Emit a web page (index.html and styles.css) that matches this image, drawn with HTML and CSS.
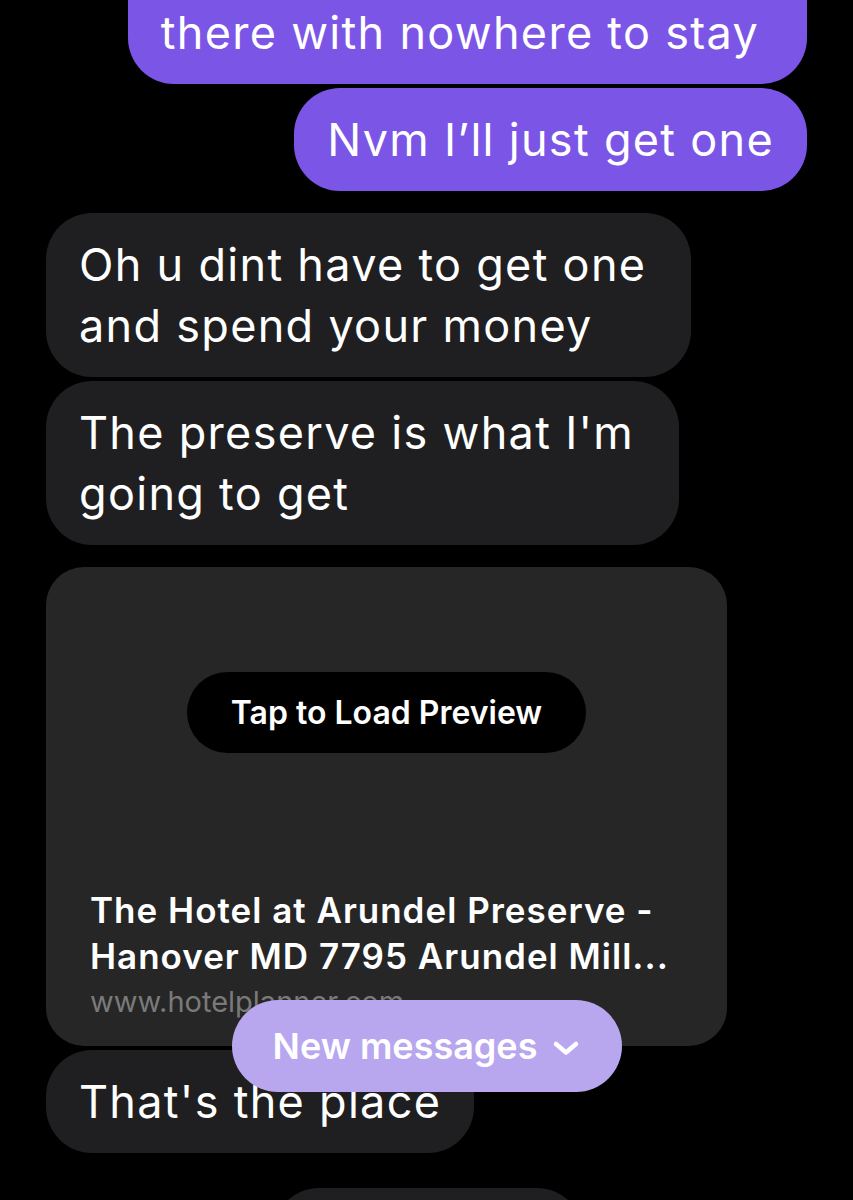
FILE: index.html
```html
<!DOCTYPE html>
<html lang="en">
<head>
    <meta charset="UTF-8">
    <meta name="viewport" content="width=device-width, initial-scale=1.0">
    <title>Messages</title>
    <link rel="stylesheet" href="styles.css">
</head>
<body>
    <div class="thread">
        <div class="msg sent cut">there with nowhere to stay</div>
        <div class="msg sent gap-s">Nvm I’ll just get one</div>

        <div class="msg received wrapped gap-l">Oh u dint have to get one<br>and spend your money</div>
        <div class="msg received wrapped gap-s">The preserve is what I'm<br>going to get</div>

        <!-- link preview -->
        <div class="card gap-l">
            <div class="card-preview">
                <button class="load-btn">Tap to Load Preview</button>
            </div>
            <div class="card-info">
                <div class="card-title">The Hotel at Arundel Preserve -<br>Hanover MD 7795 Arundel Mill...</div>
                <div class="card-url">www.hotelplanner.com</div>
            </div>
        </div>

        <div class="msg received gap-s">That's the place</div>
        <div class="msg received next"></div>
    </div>

    <button class="new-pill">
        New messages
        <svg width="30" height="18" viewBox="0 0 30 18"><path d="M5 5 L15 13.5 L25 5" fill="none" stroke="#fff" stroke-width="4.5" stroke-linecap="round" stroke-linejoin="round"/></svg>
    </button>
</body>
</html>
```

FILE: styles.css
```css
* {
    margin: 0;
    padding: 0;
    box-sizing: border-box;
}
body {
    background-color: #000;
    color: #fff;
    font-family: Inter, Roboto, "Liberation Sans", sans-serif;
    height: 1200px;
    overflow: hidden;
    position: relative;
}
.thread {
    display: flex;
    flex-direction: column;
    align-items: flex-start;
    padding: 0 46px;
}
.msg {
    font-size: 45px;
    line-height: 61px;
    letter-spacing: 1.3px;
    padding: 21px 33px;
    border-radius: 46px;
    white-space: nowrap;
}
.sent {
    align-self: flex-end;
    background-color: #7b56e6;
}
.received {
    background-color: #1f1f21;
}
.wrapped {
    padding-right: 45px;
}
.cut {
    margin-top: -78px;
    padding-top: 80px;
    padding-right: 48px;
}
.gap-s {
    margin-top: 4px;
}
.gap-l {
    margin-top: 22px;
}
.card {
    width: 681px;
    background-color: #262626;
    border-radius: 38px;
}
.card-preview {
    height: 320px;
    padding-top: 105px;
    display: flex;
    align-items: flex-start;
    justify-content: center;
}
.load-btn {
    background-color: #000;
    color: #fff;
    border: none;
    font-family: Inter, "Noto Sans", sans-serif;
    font-weight: 600;
    font-size: 32px;
    width: 399px;
    height: 81px;
    border-radius: 41px;
}
.card-info {
    padding: 0 44px 21px;
}
.card-title {
    font-weight: 600;
    font-size: 35px;
    line-height: 46px;
    letter-spacing: 1px;
    white-space: nowrap;
}
.card-url {
    font-size: 29px;
    line-height: 46px;
    color: #7a7a7a;
}
.next {
    margin-top: 35px;
    margin-left: 227px;
    width: 310px;
    height: 100px;
}
.new-pill {
    position: absolute;
    top: 1000px;
    left: 232px;
    width: 390px;
    height: 92px;
    border: none;
    border-radius: 46px;
    background-color: #b8a6ef;
    color: #fff;
    font-family: Inter, "Noto Sans", sans-serif;
    font-weight: 600;
    font-size: 36px;
    display: flex;
    align-items: center;
    justify-content: center;
    gap: 14px;
}
.new-pill svg {
    margin-top: 4px;
}
```
